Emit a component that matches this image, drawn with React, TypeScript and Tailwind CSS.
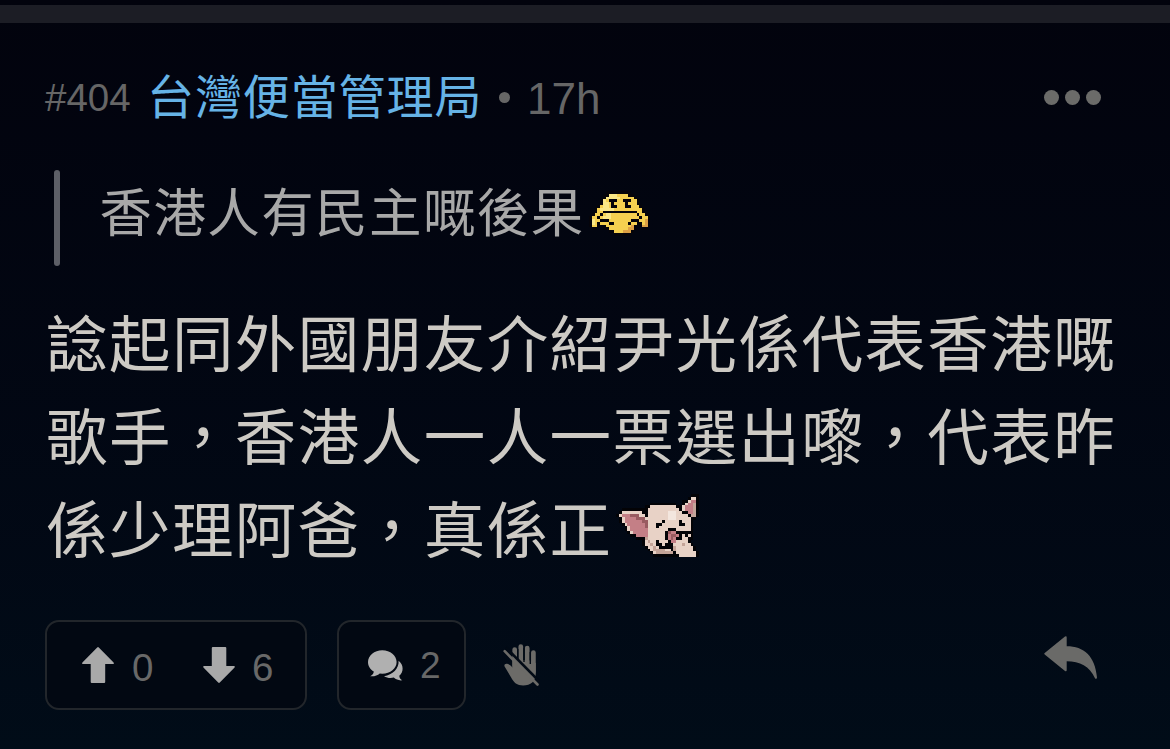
type SpriteProps = {
  rows: string[]
  palette: Record<string, string>
  cell: number
  className?: string
}

// Pixel art: one character per cell, '.' is transparent
function Sprite({ rows, palette, cell, className }: SpriteProps) {
  const cols = rows[0].length
  return (
    <svg
      className={className}
      width={cols * cell}
      height={rows.length * cell}
      viewBox={`0 0 ${cols} ${rows.length}`}
      shapeRendering="crispEdges"
    >
      {rows.flatMap((row, y) =>
        row.split('').map((c, x) =>
          c === '.' ? null : <rect key={`${x}-${y}`} x={x} y={y} width={1} height={1} fill={palette[c]} />
        )
      )}
    </svg>
  )
}

const hatRows = [
  '......kkkkkkkkk.......',
  '.....kklllyyyykk......',
  '.....klllllyyyyyk.....',
  '....klykkkyykkkyyk....',
  '....kllykyyyykyyyk....',
  '...kyllykkyyykkyyyk...',
  '..kylllllyyyyyyyyyyk..',
  '..kyykkkkkkkkkkkkyyk..',
  '.kyykyllyyyyyyyyykyyk.',
  'kyykylllyyyyyyyyyykyyk',
  'klyykkkyyyyyyyykkkyyok',
  'klykyyykkyyyyykyykkyok',
  'kyyk.kyyyyyyyyyok.kook',
  '.kk..kkyyyyyyyook..kk.',
  '.......kkyyyoook......',
  '.........kkkkkk.......',
]

const hatPalette = { k: '#05040a', y: '#f5d050', l: '#fbe886', o: '#dda044' }

const pigRows = [
  '..........................kkk.',
  '.........................kwwk.',
  '.......................kkwppk.',
  '............kkkkkkkkk..kwppsk.',
  '..........kkwwwwwwwwwkkwpppsk.',
  '..kkkkkkkkkwwwwwwwwwwwkwpppsk.',
  '.kwwwwwwwkkwwwwwwwlllwwkkppsk.',
  'kwpppdddwwkwwwwwwwlllwwwwkssk.',
  '.kwppppdddwwwwwwwwlllwwwwwkk..',
  '.kwppppppddwwwwwkwwwwwkwwwk...',
  '..kwppppppdwwwkkwwwwwwkkwwk...',
  '...kwpppppdwwwkwwwwwwwwwwwk...',
  '...kwppppppwwwwwwwkkkwwwwwk...',
  '....kwpppppwwwwwwkdppkkkkkk...',
  '.....kkppppwwwwwwkpddpkwkwk...',
  '.......kkkswwwwwwkpdpkkwwkk...',
  '.........kwswwkwwwkppwwwwk....',
  '.........kwwswkkwkkkwwwswwk...',
  '..........kwwswkkkkkswwwwwwk..',
  '...........kwsssswwkswwwwwwk..',
  '............kwsssssskwwwwwwwk.',
  '.............kkkkkkkkkwwwwwwk.',
]

const pigPalette = { k: '#030306', w: '#e8d2c6', l: '#f3e6de', s: '#c4a498', p: '#c47f86', d: '#995c61' }

function UpArrow() {
  return (
    <svg width="32" height="36" viewBox="0 0 32 36" fill="#a9a9a9">
      <path d="M15.2.4q.8-.7 1.600 0L31.600 15.600q.8 1.400-.8 1.400H23.200V35q0 1-1 1H9.700q-1 0-1-1V17H1.200Q-.4 17 .4 15.600Z" />
    </svg>
  )
}

function Bubbles() {
  return (
    <svg width="37" height="33" viewBox="0 0 37 33" fill="#b0b0b0">
      <path d="M15.300 1.200C7.300 1.200 1 6.400 1 13c0 4.100 2.300 7.500 5.800 9.500C6.600 24.700 5.400 26 3.200 27.200c3.600.5 7.200-.5 9.600-2.700l2.500.2c8 0 14.300-5.100 14.300-11.700S23.300 1.200 15.300 1.200Z" />
      <path d="M31.600 11.700c.5 7.900-5.900 14.100-14.600 15.500 3 1.800 6.500 2.300 9.800 1.400 2.200 2.100 5.200 3.100 8.500 2.700-1.800-1.100-2.900-2.500-3-4.600 4.500-3.700 4.600-10.900-.7-15Z" />
    </svg>
  )
}

function HandOff() {
  return (
    <svg width="37" height="43" viewBox="0 0 37 43">
      <g fill="none" stroke="#6c6b68" strokeWidth="4.700" strokeLinecap="round">
        <path d="M11.700 5.600V22M17.800 2.500V22M24.200 4V24M30.400 8.500V28" />
      </g>
      <path
        fill="#6c6b68"
        d="M9.400 16h16l7.350 3v11c0 7-5.100 11.500-12.600 11.500-6 0-9.500-3-12-8L1.600 22.600c-.8-2 .6-3.300 2.600-2.900 2 .5 4.200 2.300 5.200 3.900Z"
      />
      <path d="M14.800 5v11M21 4v14M27.300 8v12" stroke="#020a15" strokeWidth="1.400" />
      <path d="M3 3.500L37 38" stroke="#020a15" strokeWidth="2.600" />
      <path d="M1.700 7.200L34.500 40.500" stroke="#6c6b68" strokeWidth="2.600" strokeLinecap="round" />
    </svg>
  )
}

function Reply() {
  return (
    <svg width="54" height="44" viewBox="0 0 54 44" fill="#6a6a68">
      <path d="M21 .5q1.700-1 1.700 1V10.300C40 10.300 51 20 53 41.500q-.6 2.400-2 .7C45.500 30 36 25.400 22.700 25.300V34q0 2-1.700 1L.7 18.400q-.9-.7 0-1.400Z" />
    </svg>
  )
}

export default function App() {
  return (
    <div className="h-[749px] w-[1170px] overflow-hidden bg-linear-to-b from-[#02030d] to-[#010c18] pt-[5px] font-['Liberation_Sans','Noto_Sans_CJK_TC',sans-serif]">
      <div className="h-[18px] bg-[#1c1d25]" />

      <div className="pl-[45px] pr-[69px]">
        <header className="mt-[38px] flex h-[72px] items-center text-[#666666]">
          <span className="w-[102px] pt-px text-[38.500px]">#404</span>
          <span className="mb-[6px] w-[352px] whitespace-nowrap font-['Noto_Sans_CJK_TC',sans-serif] text-[47px] leading-[72px] tracking-[0.900px] text-[#66b3e6]">
            台灣便當管理局
          </span>
          <span className="mr-[17px] mt-px size-[11px] rounded-full bg-[#666666]" />
          <span className="pt-[3px] text-[44px]">17h</span>
          <span className="ml-auto flex gap-[6px]">
            <i className="size-[15px] rounded-full bg-[#6b6b69]" />
            <i className="size-[15px] rounded-full bg-[#6b6b69]" />
            <i className="size-[15px] rounded-full bg-[#6b6b69]" />
          </span>
        </header>

        <blockquote className="ml-[9px] mt-[37px] flex h-24">
          <div className="w-[6px] rounded-full bg-[#5d5f67]" />
          <p className="ml-[39.500px] whitespace-nowrap font-['Noto_Sans_CJK_TC',sans-serif] text-[52.500px] leading-[78px] tracking-[1.400px] text-[#a8a8a8]">
            香港人有民主嘅後果
          </p>
          <Sprite rows={hatRows} palette={hatPalette} cell={2.8} className="ml-[4px] mt-[21px] shrink-0" />
        </blockquote>
      </div>

      <div className="ml-[46px] mt-[28px] h-[279px] whitespace-nowrap font-['Noto_Sans_CJK_TC',sans-serif] text-[61.500px] leading-[93px] tracking-[1.450px] text-[#cdcac4]">
        <p>諗起同外國朋友介紹尹光係代表香港嘅</p>
        <p>歌手，香港人一人一票選出嚟，代表昨</p>
        <div className="flex">
          <p>係少理阿爸，真係正</p>
          <Sprite rows={pigRows} palette={pigPalette} cell={2.87} className="ml-[3px] mt-[14px] shrink-0" />
        </div>
      </div>

      <footer className="mt-[47px] flex h-[90px] pl-[45px] pr-[72px] text-[38.500px] text-[#686868]">
        <div className="flex w-[262px] items-center rounded-[14px] border-2 border-[#22262b] bg-[#020812] pl-[35px]">
          <UpArrow />
          <span className="ml-[18px] mt-[5px] w-[71px]">0</span>
          <span className="rotate-180">
            <UpArrow />
          </span>
          <span className="ml-[17px] mt-[5px]">6</span>
        </div>
        <div className="ml-[30px] flex w-[129px] items-center rounded-[14px] border-2 border-[#22262b] bg-[#020812] pl-[28px]">
          <Bubbles />
          <span className="ml-[16px] mt-[2px] text-[37px]">2</span>
        </div>
        <div className="ml-[37px] mt-[24px]">
          <HandOff />
        </div>
        <div className="ml-auto mt-[16px]">
          <Reply />
        </div>
      </footer>
    </div>
  )
}
